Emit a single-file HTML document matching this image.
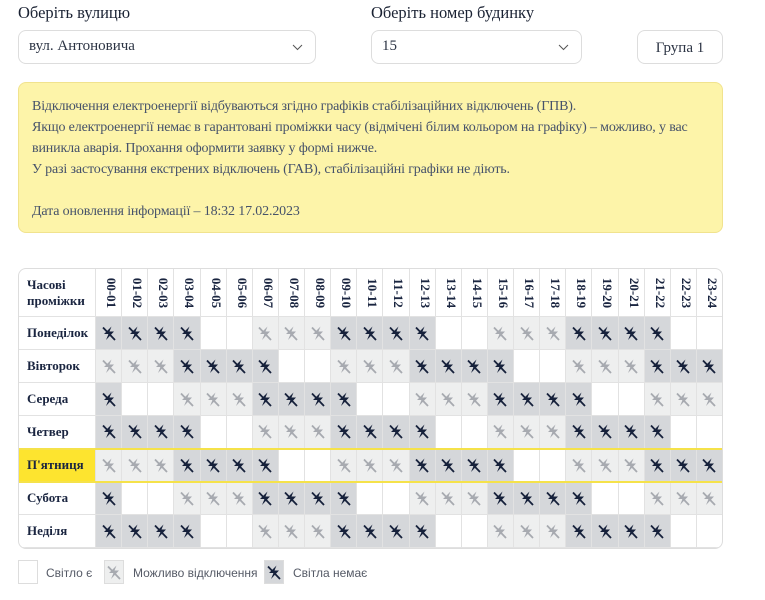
<!DOCTYPE html>
<html><head><meta charset="utf-8"><style>
*{box-sizing:border-box}
body{margin:0;width:765px;height:600px;background:#fff;font-family:"Liberation Serif",serif;color:#1a2540;position:relative;overflow:hidden}
.lbl{position:absolute;top:3px;font-size:16.5px;color:#1a2233}
.sel{position:absolute;top:30px;height:34px;border:1px solid #ddd;border-radius:8px;font-size:15px;padding:7px 10px;color:#2c3444}
.sel svg{position:absolute;right:12px;top:13px}
.btn{position:absolute;left:637px;top:30px;width:86px;height:34px;border:1px solid #ddd;border-radius:8px;font-size:15px;text-align:center;line-height:34px;color:#2c3444}
.info{position:absolute;left:18px;top:82px;width:705px;height:151px;background:#fdf4a9;border:1px solid #f1e38e;border-radius:8px;padding:13px 13px;font-size:14px;letter-spacing:-0.15px;line-height:21px;color:#46526a}
.tw{position:absolute;left:18px;top:268px;width:705px;height:281px;border:1px solid #ddd;border-radius:8px;overflow:hidden}
table{border-collapse:collapse;table-layout:fixed;width:705px;margin:-1px}
td,th{border:1px solid #e2e2e2;padding:0;text-align:center;height:33px}
th{height:48px;font-size:13px;font-weight:bold}
th.v span{display:inline-block;transform:rotate(90deg);white-space:nowrap}
td.n{text-align:left;padding-left:8px;font-weight:bold;font-size:13px}
th.n{text-align:left;padding-left:8px;line-height:16px}
td.d{background:#d5d7da;color:#16213b}
td.l{background:#eeefef;color:#a7aab0}
td svg{width:14px;height:15px;display:block;margin:auto}
tr.f td{border-top:2px solid #f5e24a;border-bottom:2px solid #f5e24a}
tr.f td.n{background:#fde42f}
.leg{position:absolute;top:560px;width:20px;height:24px;border:1px solid #ddd}
.lt{position:absolute;top:566px;font-family:"Liberation Sans",sans-serif;font-size:12px;color:#555a66}
</style></head><body>
<svg width="0" height="0" style="position:absolute"><defs><g id="i"><path d="M9.5 0.5 L2 8 H6.5 L4 14 L12 5.5 H7.5 Z" fill="currentColor"/><path d="M1 1.5 L13 14" stroke="currentColor" stroke-width="1.8"/></g></defs></svg>
<div class="lbl" style="left:18px">Оберіть вулицю</div>
<div class="lbl" style="left:371px">Оберіть номер будинку</div>
<div class="sel" style="left:18px;width:298px">вул. Антоновича<svg width="11" height="7"><path d="M1 1l4.5 4.5L10 1" stroke="#555" fill="none"/></svg></div>
<div class="sel" style="left:371px;width:211px">15<svg width="11" height="7"><path d="M1 1l4.5 4.5L10 1" stroke="#555" fill="none"/></svg></div>
<div class="btn">Група 1</div>
<div class="info">Відключення електроенергії відбуваються згідно графіків стабілізаційних відключень (ГПВ).<br>Якщо електроенергії немає в гарантовані проміжки часу (відмічені білим кольором на графіку) – можливо, у вас<br>виникла аварія. Прохання оформити заявку у формі нижче.<br>У разі застосування екстрених відключень (ГАВ), стабілізаційні графіки не діють.<br><br>Дата оновлення інформації – 18:32 17.02.2023</div>
<div class="tw"><table>
<colgroup><col style="width:77px"><col span="24"></colgroup>
<tr><th class="n">Часові<br>проміжки</th><th class="v"><span>00-01</span></th><th class="v"><span>01-02</span></th><th class="v"><span>02-03</span></th><th class="v"><span>03-04</span></th><th class="v"><span>04-05</span></th><th class="v"><span>05-06</span></th><th class="v"><span>06-07</span></th><th class="v"><span>07-08</span></th><th class="v"><span>08-09</span></th><th class="v"><span>09-10</span></th><th class="v"><span>10-11</span></th><th class="v"><span>11-12</span></th><th class="v"><span>12-13</span></th><th class="v"><span>13-14</span></th><th class="v"><span>14-15</span></th><th class="v"><span>15-16</span></th><th class="v"><span>16-17</span></th><th class="v"><span>17-18</span></th><th class="v"><span>18-19</span></th><th class="v"><span>19-20</span></th><th class="v"><span>20-21</span></th><th class="v"><span>21-22</span></th><th class="v"><span>22-23</span></th><th class="v"><span>23-24</span></th></tr>
<tr><td class="n">Понеділок</td><td class=d><svg><use href="#i"/></svg></td><td class=d><svg><use href="#i"/></svg></td><td class=d><svg><use href="#i"/></svg></td><td class=d><svg><use href="#i"/></svg></td><td></td><td></td><td class=l><svg><use href="#i"/></svg></td><td class=l><svg><use href="#i"/></svg></td><td class=l><svg><use href="#i"/></svg></td><td class=d><svg><use href="#i"/></svg></td><td class=d><svg><use href="#i"/></svg></td><td class=d><svg><use href="#i"/></svg></td><td class=d><svg><use href="#i"/></svg></td><td></td><td></td><td class=l><svg><use href="#i"/></svg></td><td class=l><svg><use href="#i"/></svg></td><td class=l><svg><use href="#i"/></svg></td><td class=d><svg><use href="#i"/></svg></td><td class=d><svg><use href="#i"/></svg></td><td class=d><svg><use href="#i"/></svg></td><td class=d><svg><use href="#i"/></svg></td><td></td><td></td></tr>
<tr><td class="n">Вівторок</td><td class=l><svg><use href="#i"/></svg></td><td class=l><svg><use href="#i"/></svg></td><td class=l><svg><use href="#i"/></svg></td><td class=d><svg><use href="#i"/></svg></td><td class=d><svg><use href="#i"/></svg></td><td class=d><svg><use href="#i"/></svg></td><td class=d><svg><use href="#i"/></svg></td><td></td><td></td><td class=l><svg><use href="#i"/></svg></td><td class=l><svg><use href="#i"/></svg></td><td class=l><svg><use href="#i"/></svg></td><td class=d><svg><use href="#i"/></svg></td><td class=d><svg><use href="#i"/></svg></td><td class=d><svg><use href="#i"/></svg></td><td class=d><svg><use href="#i"/></svg></td><td></td><td></td><td class=l><svg><use href="#i"/></svg></td><td class=l><svg><use href="#i"/></svg></td><td class=l><svg><use href="#i"/></svg></td><td class=d><svg><use href="#i"/></svg></td><td class=d><svg><use href="#i"/></svg></td><td class=d><svg><use href="#i"/></svg></td></tr>
<tr><td class="n">Середа</td><td class=d><svg><use href="#i"/></svg></td><td></td><td></td><td class=l><svg><use href="#i"/></svg></td><td class=l><svg><use href="#i"/></svg></td><td class=l><svg><use href="#i"/></svg></td><td class=d><svg><use href="#i"/></svg></td><td class=d><svg><use href="#i"/></svg></td><td class=d><svg><use href="#i"/></svg></td><td class=d><svg><use href="#i"/></svg></td><td></td><td></td><td class=l><svg><use href="#i"/></svg></td><td class=l><svg><use href="#i"/></svg></td><td class=l><svg><use href="#i"/></svg></td><td class=d><svg><use href="#i"/></svg></td><td class=d><svg><use href="#i"/></svg></td><td class=d><svg><use href="#i"/></svg></td><td class=d><svg><use href="#i"/></svg></td><td></td><td></td><td class=l><svg><use href="#i"/></svg></td><td class=l><svg><use href="#i"/></svg></td><td class=l><svg><use href="#i"/></svg></td></tr>
<tr><td class="n">Четвер</td><td class=d><svg><use href="#i"/></svg></td><td class=d><svg><use href="#i"/></svg></td><td class=d><svg><use href="#i"/></svg></td><td class=d><svg><use href="#i"/></svg></td><td></td><td></td><td class=l><svg><use href="#i"/></svg></td><td class=l><svg><use href="#i"/></svg></td><td class=l><svg><use href="#i"/></svg></td><td class=d><svg><use href="#i"/></svg></td><td class=d><svg><use href="#i"/></svg></td><td class=d><svg><use href="#i"/></svg></td><td class=d><svg><use href="#i"/></svg></td><td></td><td></td><td class=l><svg><use href="#i"/></svg></td><td class=l><svg><use href="#i"/></svg></td><td class=l><svg><use href="#i"/></svg></td><td class=d><svg><use href="#i"/></svg></td><td class=d><svg><use href="#i"/></svg></td><td class=d><svg><use href="#i"/></svg></td><td class=d><svg><use href="#i"/></svg></td><td></td><td></td></tr>
<tr class="f"><td class="n">П'ятниця</td><td class=l><svg><use href="#i"/></svg></td><td class=l><svg><use href="#i"/></svg></td><td class=l><svg><use href="#i"/></svg></td><td class=d><svg><use href="#i"/></svg></td><td class=d><svg><use href="#i"/></svg></td><td class=d><svg><use href="#i"/></svg></td><td class=d><svg><use href="#i"/></svg></td><td></td><td></td><td class=l><svg><use href="#i"/></svg></td><td class=l><svg><use href="#i"/></svg></td><td class=l><svg><use href="#i"/></svg></td><td class=d><svg><use href="#i"/></svg></td><td class=d><svg><use href="#i"/></svg></td><td class=d><svg><use href="#i"/></svg></td><td class=d><svg><use href="#i"/></svg></td><td></td><td></td><td class=l><svg><use href="#i"/></svg></td><td class=l><svg><use href="#i"/></svg></td><td class=l><svg><use href="#i"/></svg></td><td class=d><svg><use href="#i"/></svg></td><td class=d><svg><use href="#i"/></svg></td><td class=d><svg><use href="#i"/></svg></td></tr>
<tr><td class="n">Субота</td><td class=d><svg><use href="#i"/></svg></td><td></td><td></td><td class=l><svg><use href="#i"/></svg></td><td class=l><svg><use href="#i"/></svg></td><td class=l><svg><use href="#i"/></svg></td><td class=d><svg><use href="#i"/></svg></td><td class=d><svg><use href="#i"/></svg></td><td class=d><svg><use href="#i"/></svg></td><td class=d><svg><use href="#i"/></svg></td><td></td><td></td><td class=l><svg><use href="#i"/></svg></td><td class=l><svg><use href="#i"/></svg></td><td class=l><svg><use href="#i"/></svg></td><td class=d><svg><use href="#i"/></svg></td><td class=d><svg><use href="#i"/></svg></td><td class=d><svg><use href="#i"/></svg></td><td class=d><svg><use href="#i"/></svg></td><td></td><td></td><td class=l><svg><use href="#i"/></svg></td><td class=l><svg><use href="#i"/></svg></td><td class=l><svg><use href="#i"/></svg></td></tr>
<tr><td class="n">Неділя</td><td class=d><svg><use href="#i"/></svg></td><td class=d><svg><use href="#i"/></svg></td><td class=d><svg><use href="#i"/></svg></td><td class=d><svg><use href="#i"/></svg></td><td></td><td></td><td class=l><svg><use href="#i"/></svg></td><td class=l><svg><use href="#i"/></svg></td><td class=l><svg><use href="#i"/></svg></td><td class=d><svg><use href="#i"/></svg></td><td class=d><svg><use href="#i"/></svg></td><td class=d><svg><use href="#i"/></svg></td><td class=d><svg><use href="#i"/></svg></td><td></td><td></td><td class=l><svg><use href="#i"/></svg></td><td class=l><svg><use href="#i"/></svg></td><td class=l><svg><use href="#i"/></svg></td><td class=d><svg><use href="#i"/></svg></td><td class=d><svg><use href="#i"/></svg></td><td class=d><svg><use href="#i"/></svg></td><td class=d><svg><use href="#i"/></svg></td><td></td><td></td></tr>
</table></div>
<div class="leg" style="left:18px"></div><div class="lt" style="left:46px">Світло є</div>
<div class="leg" style="left:104px;background:#eeefef;color:#a7aab0;padding-top:4px"><svg width="14" height="15" style="display:block;margin:auto"><use href="#i"/></svg></div><div class="lt" style="left:133px">Можливо відключення</div>
<div class="leg" style="left:264px;background:#d5d7da;color:#16213b;padding-top:4px"><svg width="14" height="15" style="display:block;margin:auto"><use href="#i"/></svg></div><div class="lt" style="left:293px">Світла немає</div>
</body></html>
